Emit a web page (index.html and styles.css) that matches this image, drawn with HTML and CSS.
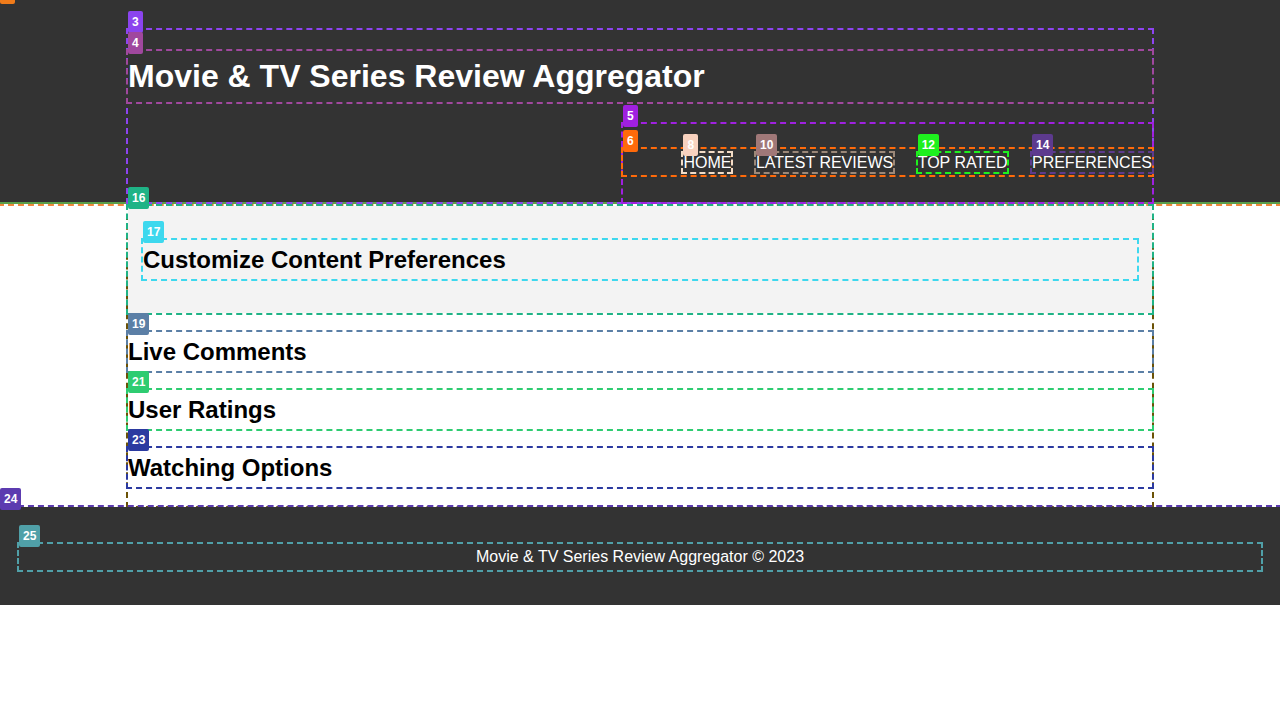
FILE: index.html
```html
<!DOCTYPE html>
<html lang="en">
<head>
    <meta charset="UTF-8">
    <title>Movie &amp; TV Series Review Aggregator</title>
    <link rel="stylesheet" href="styles.css">
</head>
<body>
<header class="site-header">
    <span class="tag tag-top c1"></span>
    <div class="wrap">
        <span class="tag c3">3</span>
        <h1 class="title"><span class="tag c4">4</span>Movie &amp; TV Series Review Aggregator</h1>
        <nav class="nav">
            <span class="tag c5">5</span>
            <ul class="menu">
                <span class="tag c6">6</span>
                <li><a href="#" class="lnk l8"><span class="tag c8">8</span>HOME</a></li>
                <li><a href="#" class="lnk l10"><span class="tag c10">10</span>LATEST REVIEWS</a></li>
                <li><a href="#" class="lnk l12"><span class="tag c12">12</span>TOP RATED</a></li>
                <li><a href="#" class="lnk l14"><span class="tag c14">14</span>PREFERENCES</a></li>
            </ul>
        </nav>
    </div>
</header>

<main class="content">
    <section class="prefs">
        <span class="tag c16">16</span>
        <h2 class="h17"><span class="tag c17">17</span>Customize Content Preferences</h2>
    </section>
    <section class="block">
        <h2 class="h19"><span class="tag c19">19</span>Live Comments</h2>
    </section>
    <section class="block">
        <h2 class="h21"><span class="tag c21">21</span>User Ratings</h2>
    </section>
    <section class="block">
        <h2 class="h23"><span class="tag c23">23</span>Watching Options</h2>
    </section>
</main>

<footer class="site-footer">
    <span class="tag c24">24</span>
    <p class="copy"><span class="tag c25">25</span>Movie &amp; TV Series Review Aggregator &copy; 2023</p>
</footer>
</body>
</html>
```

FILE: styles.css
```css
*{
    box-sizing: border-box;
}
body{
    margin: 0;
    font-family: "Liberation Sans", Arial, sans-serif;
    font-size: 16px;
    background: #fff;
    color: #000;
}

/* debug labels */
.tag{
    position: absolute;
    top: -19px;
    left: 0;
    height: 22px;
    line-height: 22px;
    padding: 0 4px;
    font-size: 12px;
    font-weight: bold;
    color: #fff;
    border-radius: 2px;
    z-index: 5;
}
.tag-top{
    top: -18px;
    width: 15px;
}
.c1{ background: #f07b1a; }
.c3{ background: #8b44ee; }
.c4{ background: #a0489e; }
.c5{ background: #a020e0; }
.c6{ background: #ff6a0a; }
.c8{ background: #f8d2bf; }
.c10{ background: #a07878; }
.c12{ background: #1ef01e; }
.c14{ background: #5d3a8e; }
.c16{ background: #1fb386; }
.c17{ background: #3dd8ee; }
.c19{ background: #5b7fa6; }
.c21{ background: #2ecc71; }
.c23{ background: #2b3aa0; }
.c24{ background: #5c3bb0; }
.c25{ background: #50a0a8; }

/* header */
.site-header{
    position: relative;
    background: #333;
    color: #fff;
    padding-top: 30px;
    border-bottom: 2px solid #5a9e4a;
    outline: 2px dashed #f0883a;
}
.wrap{
    position: relative;
    width: 1024px;
    margin: 0 auto;
    display: flex;
    flex-direction: column;
    outline: 2px dashed #8e44f0;
}
.title{
    position: relative;
    margin: 21px 0 22px;
    font-size: 32px;
    line-height: 51px;
    font-weight: bold;
    outline: 2px dashed #a0489e;
}
.nav{
    position: relative;
    align-self: flex-end;
    width: 529px;
    padding: 25px 0 27px;
    outline: 2px dashed #a020e0;
}
.menu{
    position: relative;
    list-style: none;
    margin: 0;
    padding: 0;
    height: 26px;
    display: flex;
    justify-content: flex-end;
    align-items: center;
    gap: 24.5px;
    outline: 2px dashed #ff6a0a;
}
.lnk{
    position: relative;
    display: block;
    color: #fff;
    text-decoration: none;
    line-height: 19px;
}
.l8{ outline: 2px dashed #f3dcc6; }
.l10{ outline: 2px dashed #9c8878; }
.l12{ outline: 2px dashed #1ef01e; }
.l14{ outline: 2px dashed #5d3a8e; }

/* main */
.content{
    position: relative;
    display: flow-root;
    width: 1024px;
    margin: 2px auto 1px;
    outline: 2px dashed #6b5206;
}
.content h2{
    position: relative;
    margin: 19px 0;
    font-size: 24px;
    line-height: 39px;
    font-weight: bold;
}
.prefs{
    position: relative;
    background: #f3f3f3;
    padding: 15px;
    outline: 2px dashed #1fb386;
}
.h17{ outline: 2px dashed #3dd8ee; }
.h19{ outline: 2px dashed #5b7fa6; }
.h21{ outline: 2px dashed #2ecc71; }
.h23{ outline: 2px dashed #2b3aa0; }

/* footer */
.site-footer{
    position: relative;
    background: #333;
    color: #fff;
    padding: 20px 19px;
    outline: 2px dashed #5c3bb0;
}
.copy{
    position: relative;
    margin: 17px 0 15px;
    line-height: 26px;
    text-align: center;
    outline: 2px dashed #50a0a8;
}
```
